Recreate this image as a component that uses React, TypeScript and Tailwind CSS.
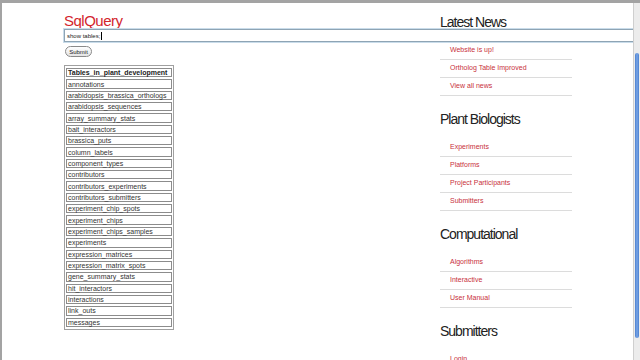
import React from "react";

const tables = [
  "annotations",
  "arabidopsis_brassica_orthologs",
  "arabidopsis_sequences",
  "array_summary_stats",
  "bait_interactors",
  "brassica_puts",
  "column_labels",
  "component_types",
  "contributors",
  "contributors_experiments",
  "contributors_submitters",
  "experiment_chip_spots",
  "experiment_chips",
  "experiment_chips_samples",
  "experiments",
  "expression_matrices",
  "expression_matrix_spots",
  "gene_summary_stats",
  "hit_interactors",
  "interactions",
  "link_outs",
  "messages",
];

const sections: { title: string; links: string[] }[] = [
  { title: "Latest News", links: ["Website is up!", "Ortholog Table Improved", "View all news"] },
  { title: "Plant Biologists", links: ["Experiments", "Platforms", "Project Participants", "Submitters"] },
  { title: "Computational", links: ["Algorithms", "Interactive", "User Manual"] },
  { title: "Submitters", links: ["Login"] },
];

export default function App() {
  return (
    <div
      className="w-[640px] h-[360px] overflow-hidden bg-white border-t-[3px] border-l-[2px] border-[#a3a3a3] flex"
      style={{ fontFamily: '"Liberation Sans", Arial, sans-serif' }}
    >
      <div className="flex-1 flex min-w-0">
        {/* Left column */}
        <div className="w-[438px] shrink-0 pl-[62px] flex flex-col items-start">
          <h1 className="mt-[10px] text-[15px] leading-[16px] tracking-[-0.5px] text-[#d3252d]">SqlQuery</h1>
          <div className="w-[570px] h-[13px] shrink-0 border border-[#8ea4b4] shadow-[0_0_0_1px_#c9dcea] bg-white flex items-center pl-[2px] text-[6px] leading-[6px] text-[#222]">
            <span>show tables;</span>
            <span className="w-px h-[8px] bg-black ml-[1px]"></span>
          </div>
          <button className="mt-[4px] ml-[1px] w-[27px] h-[11px] rounded-full border border-[#8a8a8a] bg-gradient-to-b from-white to-[#e4e4e4] text-[6px] leading-[6px] text-[#222] flex items-center justify-center">
            Submit
          </button>
          <table className="mt-[8px] w-[110px] border border-[#a0a0a0] border-separate border-spacing-x-[1px] border-spacing-y-[2px] text-[7px] leading-[7px] text-[#333]">
            <tbody>
              <tr>
                <th className="h-[9.35px] border border-[#8c8c8c] px-[1px] py-0 text-left font-bold text-[#222] whitespace-nowrap">
                  Tables_in_plant_development
                </th>
              </tr>
              {tables.map((t) => (
                <tr key={t}>
                  <td className="h-[9.35px] border border-[#8c8c8c] px-[1px] py-0 whitespace-nowrap">{t}</td>
                </tr>
              ))}
            </tbody>
          </table>
        </div>

        {/* Right column */}
        <div className="flex-1 pt-[11px] flex flex-col">
          {sections.map((s, i) => (
            <div key={s.title} className={i === 0 ? "" : "mt-[15px]"}>
              <h2 className="text-[14px] leading-[16px] tracking-[-1px] text-[#222]">{s.title}</h2>
              <ul className="mt-[12px] w-[132px]">
                {s.links.map((l) => (
                  <li
                    key={l}
                    className="h-[18px] border-b border-[#dcdcdc] pl-[10px] pb-[2px] flex items-center text-[7px] leading-[8px] text-[#c8303c]"
                  >
                    {l}
                  </li>
                ))}
              </ul>
            </div>
          ))}
        </div>
      </div>

      {/* Scrollbar */}
      <div className="w-[7px] shrink-0 border-l border-[#cfcfcf] bg-[#ececec] flex flex-col">
        <div className="mt-[50px] h-[285px] mx-[1px] rounded-[3px] bg-gradient-to-r from-[#4a7fcf] via-[#7aa6e6] to-[#4a7fcf]"></div>
      </div>
    </div>
  );
}
